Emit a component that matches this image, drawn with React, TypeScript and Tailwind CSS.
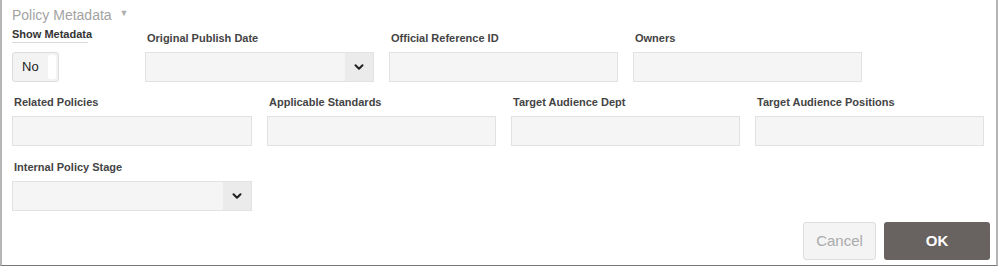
import { ChevronDown } from 'lucide-react';

function Field({ label, width, select }: { label: string; width: string; select?: boolean }) {
  return (
    <div className={`flex flex-col ${width}`}>
      <label className="h-[14px] whitespace-nowrap pl-[2px] text-[11px] font-bold leading-[14px] text-[#444]">{label}</label>
      <div className="mt-[7px] flex h-[30px] border border-[#e2e2e2] bg-[#f5f5f5]">
        <div className="flex-1" />
        {select && (
          <div className="flex w-[28px] items-center justify-center bg-[#ebebeb]">
            <ChevronDown className="h-[14px] w-[14px] text-[#222]" strokeWidth={3.5} />
          </div>
        )}
      </div>
    </div>
  );
}

export default function App() {
  return (
    <div
      className="relative h-[268px] w-[1000px] overflow-hidden bg-white"
      style={{ fontFamily: '"Liberation Sans", Arial, sans-serif' }}
    >
      <div className="flex h-[266px] w-[998px] flex-col border-l-2 border-r-2 border-b border-l-[#b5b5b5] border-r-[#b5b5b5] border-b-[#777] px-[10px]">
        {/* Title */}
        <div className="flex h-[24px] items-end gap-[8px] pt-[4px] text-[14px] leading-[18px] text-[#a3a3a3]">
          <span>Policy Metadata</span>
          <span className="pb-[2px] text-[9px] text-[#b0b0b0]">▼</span>
        </div>

        {/* Row 1 */}
        <div className="mt-[1px] flex gap-[15px]">
          <div className="flex w-[118px] flex-col">
            <div className="h-[18px] w-[76px] whitespace-nowrap border-b border-[#d9d9d9] pt-[2px] text-[11px] font-bold leading-[14px] text-[#333]">
              Show Metadata
            </div>
            <div className="mt-[9px] flex h-[30px] w-[47px] items-center rounded-[3px] border border-[#dcdcdc] bg-[#f3f3f3] pl-[9px] pr-[2px] text-[13px] text-[#222]">
              <span className="flex-1">No</span>
              <span className="h-[24px] w-[8px] rounded-[2px] bg-white" />
            </div>
          </div>
          <div className="flex gap-[15px] pt-[6px]">
            <Field label="Original Publish Date" width="w-[229px]" select />
            <Field label="Official Reference ID" width="w-[229px]" />
            <Field label="Owners" width="w-[229px]" />
          </div>
        </div>

        {/* Row 2 */}
        <div className="mt-[13px] flex gap-[15px]">
          <Field label="Related Policies" width="w-[240px]" />
          <Field label="Applicable Standards" width="w-[229px]" />
          <Field label="Target Audience Dept" width="w-[229px]" />
          <Field label="Target Audience Positions" width="w-[229px]" />
        </div>

        {/* Row 3 */}
        <div className="mt-[14px] flex">
          <Field label="Internal Policy Stage" width="w-[240px]" select />
        </div>

        {/* Footer */}
        <div className="-mr-[4px] mt-[11px] flex justify-end gap-[8px]">
          <button className="h-[38px] w-[73px] rounded-[3px] border border-[#dedede] bg-[#f4f4f4] text-[15px] text-[#ababab]">
            Cancel
          </button>
          <button className="h-[38px] w-[106px] rounded-[3px] bg-[#686361] text-[15px] font-bold text-white">
            OK
          </button>
        </div>
      </div>
    </div>
  );
}
